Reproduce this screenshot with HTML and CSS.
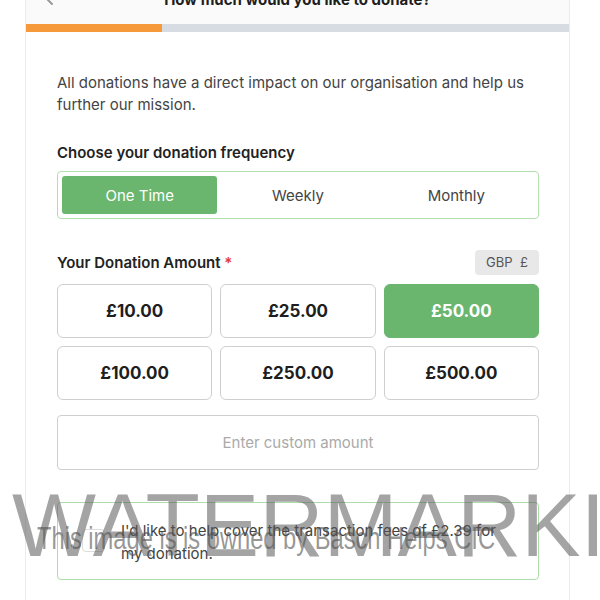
FILE: index.html
```html
<!DOCTYPE html>
<html lang="en">
<head>
<meta charset="utf-8">
<title>Donate</title>
<link rel="stylesheet" href="styles.css">
</head>
<body>
<div class="page">
  <div class="card">
    <div class="header">
      <svg class="back" width="12" height="20" viewBox="0 0 12 20"><path d="M10 2 L2 10 L10 18" fill="none" stroke="#9a9a9a" stroke-width="2" stroke-linecap="round" stroke-linejoin="round"/></svg>
      <h1 class="title">How much would you like to donate?</h1>
    </div>
    <div class="progress"><div class="progress-fill" style="width:25%"></div></div>
    <div class="content">
      <p class="intro">All donations have a direct impact on our organisation and help us further our mission.</p>
      <h2 class="label">Choose your donation frequency</h2>
      <div class="freq">
        <button class="freq-btn active">One Time</button>
        <button class="freq-btn">Weekly</button>
        <button class="freq-btn">Monthly</button>
      </div>
      <div class="amount-head">
        <h2 class="label">Your Donation Amount <span class="req">*</span></h2>
        <span class="currency">GBP&nbsp;&nbsp;£</span>
      </div>
      <div class="amounts">
        <button class="amt">£10.00</button>
        <button class="amt">£25.00</button>
        <button class="amt active">£50.00</button>
        <button class="amt">£100.00</button>
        <button class="amt">£250.00</button>
        <button class="amt">£500.00</button>
      </div>
      <div class="custom">Enter custom amount</div>
      <div class="fees">
        <span class="check"></span>
        <span class="fees-text">I'd like to help cover the transaction fees of £2.39 for my donation.</span>
      </div>
    </div>
  </div>
</div>
<div class="wm-big">WATERMARKING</div>
<div class="wm-small">This image is is owned by Basch Helps CIC</div>
</body>
</html>
```
FILE: styles.css
```css
html, body {
  margin: 0;
  padding: 0;
  background: #ffffff;
  overflow: hidden;
  height: 600px;
}
body {
  font-family: Inter, "Noto Sans", sans-serif;
  color: #333;
  position: relative;
}
.page {
  padding: 0 30px 0 25px;
}
.card {
  margin-top: -17px;
  border: 1px solid #ececec;
  background: #fff;
  height: 640px;
}
.header {
  background: #fafafa;
  padding: 5px 0 13px;
  display: flex;
  justify-content: center;
  position: relative;
}
.back {
  position: absolute;
  left: 16px;
  top: 2px;
}
.title {
  margin: 0;
  font-size: 15px;
  line-height: 22px;
  font-weight: 700;
  color: #1e1e1e;
}
.progress {
  height: 8px;
  background: #d6dce2;
}
.progress-fill {
  height: 100%;
  background: #f5993b;
}
.content {
  padding: 40px 30px 0 31px;
}
.intro {
  margin: 0;
  font-size: 15px;
  line-height: 22px;
  color: #444;
}
.label {
  margin: 0;
  font-size: 15px;
  line-height: 22px;
  font-weight: 600;
  color: #222;
}
.intro + .label {
  margin-top: 26px;
}
.freq {
  margin-top: 7px;
  border: 1px solid #b3dfae;
  border-radius: 4px;
  padding: 4px;
  display: grid;
  grid-template-columns: repeat(3, 1fr);
  gap: 3px;
}
.freq-btn {
  height: 38px;
  border: none;
  background: transparent;
  font-family: inherit;
  font-size: 15px;
  color: #444;
  border-radius: 3px;
  padding: 0;
}
.freq-btn.active {
  background: #6ab66e;
  color: #fff;
}
.amount-head {
  margin-top: 31px;
  display: flex;
  justify-content: space-between;
  align-items: center;
}
.req {
  color: #e53935;
}
.currency {
  background: #e8e8e8;
  color: #555;
  font-size: 13px;
  border-radius: 4px;
  height: 25px;
  line-height: 25px;
  width: 64px;
  text-align: center;
}
.amounts {
  margin-top: 9px;
  display: grid;
  grid-template-columns: repeat(3, 1fr);
  gap: 8px;
}
.amt {
  height: 54px;
  border: 1px solid #cfcfcf;
  border-radius: 6px;
  background: #fff;
  font-family: inherit;
  font-size: 17px;
  font-weight: 700;
  color: #1e1e1e;
  padding: 0;
}
.amt.active {
  background: #6ab66e;
  border-color: #6ab66e;
  color: #fff;
}
.custom {
  margin-top: 15px;
  height: 53px;
  border: 1px solid #cfcfcf;
  border-radius: 4px;
  display: flex;
  align-items: center;
  justify-content: center;
  font-size: 15px;
  color: #aaa;
}
.fees {
  margin-top: 32px;
  border: 1px solid #aedcaa;
  border-radius: 4px;
  padding: 16px 25px 14px 24px;
  display: flex;
  align-items: flex-start;
  gap: 16px;
}
.check {
  flex: none;
  width: 21px;
  height: 21px;
  margin-top: 10px;
  border: 1px solid #dcdcdc;
  border-radius: 4px;
  background: #fff;
}
.fees-text {
  font-size: 15px;
  line-height: 23px;
  color: #444;
}
.wm-big {
  position: absolute;
  left: 12px;
  top: 481px;
  font-family: "Liberation Sans", Arial, sans-serif;
  font-size: 89px;
  line-height: 1;
  color: rgba(90, 90, 90, 0.55);
  white-space: nowrap;
  pointer-events: none;
}
.wm-small {
  position: absolute;
  left: 37px;
  top: 522px;
  font-family: "Liberation Sans", Arial, sans-serif;
  font-size: 32px;
  line-height: 1;
  color: rgba(80, 80, 80, 0.6);
  white-space: nowrap;
  transform: scaleX(0.74);
  transform-origin: left top;
  pointer-events: none;
}
```
